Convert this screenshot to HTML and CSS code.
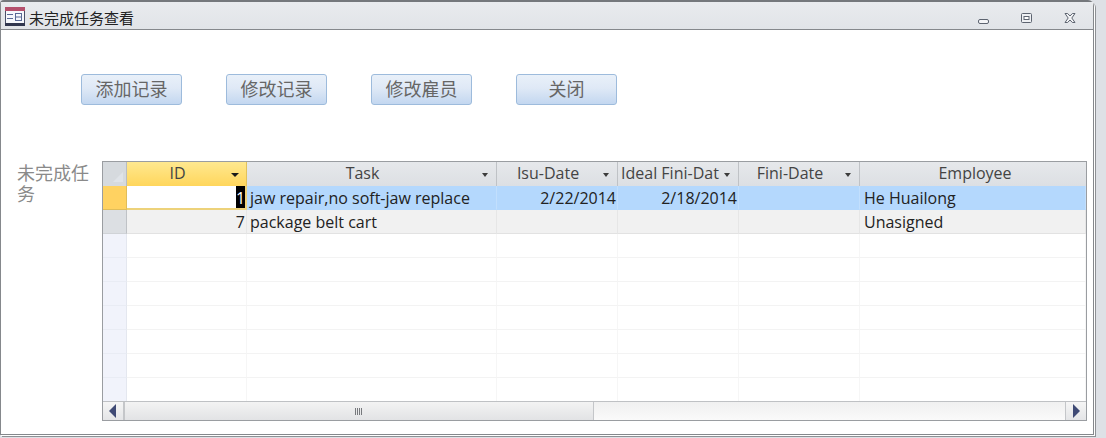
FILE: index.html
```html
<!DOCTYPE html>
<html lang="zh">
<head>
<meta charset="utf-8">
<title>未完成任务查看</title>
<link rel="stylesheet" href="styles.css">
</head>
<body>
<div class="window">
  <header class="titlebar">
    <svg class="app-icon" width="20" height="19" viewBox="0 0 20 19">
      <rect x="0.5" y="0.5" width="19" height="18" fill="#f6f8fc" stroke="#4a5068"/>
      <rect x="0" y="0" width="20" height="4" fill="#b5506c"/>
      <rect x="0" y="16" width="20" height="3" fill="#30364e"/>
      <path d="M2 7.500h6M2 11.500h6" stroke="#5a6a96" fill="none"/>
      <rect x="10.500" y="6.500" width="6" height="7" fill="none" stroke="#5a6a96"/>
      <path d="M10.500 10h6" stroke="#5a6a96"/>
    </svg>
    <span class="title">未完成任务查看</span>
    <div class="controls">
      <svg class="ctl" width="11" height="5" viewBox="0 0 11 5"><rect x="0.500" y="0.500" width="10" height="4" rx="1.500" fill="#f4f5f7" stroke="#5d6470"/></svg>
      <svg class="ctl" width="11" height="10" viewBox="0 0 11 10"><rect x="0.500" y="0.500" width="10" height="9" rx="1" fill="#eef0f3" stroke="#5d6470"/><rect x="3" y="3.500" width="5" height="3" fill="#fff" stroke="#5d6470" stroke-width="1"/></svg>
      <svg class="ctl" width="12" height="10" viewBox="0 0 12 10"><path d="M1 .5h2.600L6 3l2.400-2.500H11L7.800 5 11 9.500H8.400L6 7 3.600 9.500H1L4.200 5z" fill="#f2f3f5" stroke="#5d6470"/></svg>
    </div>
  </header>
  <main class="content">
    <div class="actions">
      <button class="btn">添加记录</button>
      <button class="btn">修改记录</button>
      <button class="btn">修改雇员</button>
      <button class="btn">关闭</button>
    </div>
    <div class="subform">
      <div class="sub-label">未完成任务</div>
      <div class="sheet">
        <div class="grid">
          <div class="corner"><svg width="12" height="12" viewBox="0 0 12 12"><path d="M11 1v10H1z" fill="#dfe3e8"/></svg></div>
          <div class="hd hd-active"><span>ID</span><i class="caret caret-dark"></i></div>
          <div class="hd"><span>Task</span><i class="caret"></i></div>
          <div class="hd"><span>Isu-Date</span><i class="caret"></i></div>
          <div class="hd hd-tight"><span>Ideal Fini-Dat</span><i class="caret"></i></div>
          <div class="hd"><span>Fini-Date</span><i class="caret"></i></div>
          <div class="hd hd-plain"><span>Employee</span></div>

          <div class="sel sel-active"></div>
          <div class="c c-num c-current"><b class="cursor">1</b></div>
          <div class="c c-hi">jaw repair,no soft-jaw replace</div>
          <div class="c c-hi c-num">2/22/2014</div>
          <div class="c c-hi c-num">2/18/2014</div>
          <div class="c c-hi"></div>
          <div class="c c-hi c-emp">He Huailong</div>

          <div class="sel sel-alt"></div>
          <div class="c c-alt c-num">7</div>
          <div class="c c-alt">package belt cart</div>
          <div class="c c-alt"></div>
          <div class="c c-alt"></div>
          <div class="c c-alt"></div>
          <div class="c c-alt c-emp">Unasigned</div>

          <div class="sel"></div><div class="c"></div><div class="c"></div><div class="c"></div><div class="c"></div><div class="c"></div><div class="c"></div>
          <div class="sel"></div><div class="c"></div><div class="c"></div><div class="c"></div><div class="c"></div><div class="c"></div><div class="c"></div>
          <div class="sel"></div><div class="c"></div><div class="c"></div><div class="c"></div><div class="c"></div><div class="c"></div><div class="c"></div>
          <div class="sel"></div><div class="c"></div><div class="c"></div><div class="c"></div><div class="c"></div><div class="c"></div><div class="c"></div>
          <div class="sel"></div><div class="c"></div><div class="c"></div><div class="c"></div><div class="c"></div><div class="c"></div><div class="c"></div>
          <div class="sel"></div><div class="c"></div><div class="c"></div><div class="c"></div><div class="c"></div><div class="c"></div><div class="c"></div>
          <div class="sel sel-last"></div><div class="c c-last"></div><div class="c c-last"></div><div class="c c-last"></div><div class="c c-last"></div><div class="c c-last"></div><div class="c c-last"></div>
        </div>
        <div class="scrollbar">
          <div class="sb-btn"><svg width="10" height="14" viewBox="0 0 10 14"><path d="M8 0v14L1 7z" fill="#3f4a75"/></svg></div>
          <div class="sb-thumb"><svg width="9" height="7" viewBox="0 0 9 7"><path d="M.5 0v7M2.500 0v7M4.500 0v7M6.500 0v7" stroke="#77797d"/></svg></div>
          <div class="sb-track"></div>
          <div class="sb-btn sb-btn-end"><svg width="10" height="14" viewBox="0 0 10 14"><path d="M2 0v14l7-7z" fill="#3f4a75"/></svg></div>
        </div>
      </div>
    </div>
  </main>
</div>
</body>
</html>
```

FILE: styles.css
```css
* { box-sizing: border-box; }
html, body { margin: 0; height: 100%; }
body {
  background: #dee1e6;
  overflow: hidden;
  font-family: "Open Sans", "Noto Sans CJK SC", sans-serif;
}
.window {
  width: 1094px;
  height: 435px;
  display: flex;
  flex-direction: column;
  background: #fff;
  border: 1px solid #85888c;
  border-top: 2px solid #75787c;
  border-radius: 4px 6px 0 0;
  box-shadow: 1px 1px 0 #fff, 2px 2px 0 #8e9195;
}
.titlebar {
  height: 28px;
  flex: none;
  display: flex;
  align-items: center;
  padding: 4px 0 0 4px;
  background: linear-gradient(#e9ebee, #e1e4e8);
  border-bottom: 1px solid #85888c;
}
.app-icon { flex: none; margin-top: -2px; }
.title {
  margin-left: 4px;
  font: 15px/18px "Noto Sans CJK SC", sans-serif;
  color: #222;
}
.controls {
  margin-left: auto;
  display: flex;
  align-items: center;
  padding-right: 17px;
  gap: 32px;
}
.ctl:first-child { margin-top: 8px; }
.content { flex: 1; min-height: 0; padding: 44px 5px 0 0; }
.actions { display: flex; gap: 44px; padding-left: 80px; }
.btn {
  width: 101px;
  height: 31px;
  padding: 0 0 3px;
  border: 1px solid #9dbbdc;
  border-radius: 3px;
  background: linear-gradient(#e9f0f9, #dfe9f6 45%, #c3d7f0);
  color: #666;
  font: 18px/1 "Noto Sans CJK SC", sans-serif;
}
.subform { display: flex; margin-top: 56px; }
.sub-label {
  width: 101px;
  flex: none;
  padding: 1px 13px 0 16px;
  color: #8a8a8a;
  font: 18px/21px "Noto Sans CJK SC", sans-serif;
}
.sheet {
  width: 985px;
  height: 260px;
  border: 1px solid #9a9da1;
  display: flex;
  flex-direction: column;
}
.grid {
  display: grid;
  grid-template-columns: 24px 120px 250px 121px 121px 121px 226px;
  grid-auto-rows: 24px;
  overflow: hidden;
  height: 239px;
  color: #222;
  font-size: 16px;
}
.corner {
  background: #d6dade;
  border-right: 1px solid #b9bcc0;
  display: flex;
  align-items: flex-end;
  justify-content: flex-end;
  padding: 0 2px 3px 0;
}
.hd {
  position: relative;
  display: flex;
  align-items: center;
  justify-content: center;
  padding: 0 18px 2px 0;
  background: linear-gradient(#e6e8eb, #dcdfe3);
  border-right: 1px solid #bfc2c6;
  color: #444;
  white-space: nowrap;
  line-height: 22px;
}
.hd-plain { padding: 0 0 2px 4px; border-right: 0; }
.hd-tight { justify-content: flex-start; padding: 0 0 2px 3px; }
.hd-active {
  background: linear-gradient(#ffe88f, #ffd65c);
  border-right-color: #e2c25c;
}
.caret {
  position: absolute;
  right: 8px;
  top: 11px;
  border: 3px solid transparent;
  border-top: 4px solid #3c3c3c;
  border-bottom: 0;
}
.caret-dark { border-top-color: #1a1a1a; border-left-width: 4px; border-right-width: 4px; right: 7px; }
.sel {
  background: #f1f3fb;
  border-right: 1px solid #e4e7ef;
  border-bottom: 1px solid #e9ecf4;
}
.sel-active { background: #ffd261; border-right: 1px solid #e0bd5a; border-bottom: 1px solid #e0bd5a; }
.sel-alt { background: #dcdfe3; border-right: 1px solid #bfc2c6; border-bottom: 1px solid #d0d3d7; }
.c {
  min-width: 0;
  padding: 0 1px 0 3px;
  border-right: 1px solid #f6f6f6;
  border-bottom: 1px solid #f3f3f3;
  line-height: 25px;
  white-space: nowrap;
  overflow: hidden;
}
.c-num { text-align: right; }
.c-hi { background: #b4d8fd; border-right-color: #c2dffd; border-bottom-color: #b4d8fd; }
.c-alt { background: #f1f1f1; border-right-color: #e6e6e6; border-bottom-color: #e2e2e2; }
.c-emp { padding-left: 4px; }
.c-current {
  background: #fff;
  border-bottom: 2px solid #edd27a;
  border-right: 2px solid #edd27a;
  padding: 0;
}
.cursor {
  display: block;
  width: 9px;
  margin-left: auto;
  background: #000;
  color: #fff;
  font-weight: 400;
  height: 22px;
  line-height: 25px;
  text-align: center;
  overflow: hidden;
}
.c-last { border-bottom: 0; }
.sel-last { border-bottom: 0; }
.scrollbar {
  height: 19px;
  flex: none;
  display: flex;
  border-top: 1px solid #bfc1c4;
  background: linear-gradient(#f0f0f0, #fafafa);
}
.sb-btn {
  width: 21px;
  flex: none;
  display: flex;
  align-items: center;
  justify-content: center;
  background: linear-gradient(#f5f5f5, #e4e5e7);
  border-right: 1px solid #c4c6c9;
}
.sb-btn-end { border-right: 0; border-left: 1px solid #c4c6c9; }
.sb-thumb {
  width: 470px;
  flex: none;
  display: flex;
  align-items: center;
  justify-content: center;
  background: linear-gradient(#f3f3f3, #e2e3e5);
  border-right: 1px solid #c4c6c9;
  border-left: 1px solid #c4c6c9;
}
.sb-track { flex: 1; }
```
